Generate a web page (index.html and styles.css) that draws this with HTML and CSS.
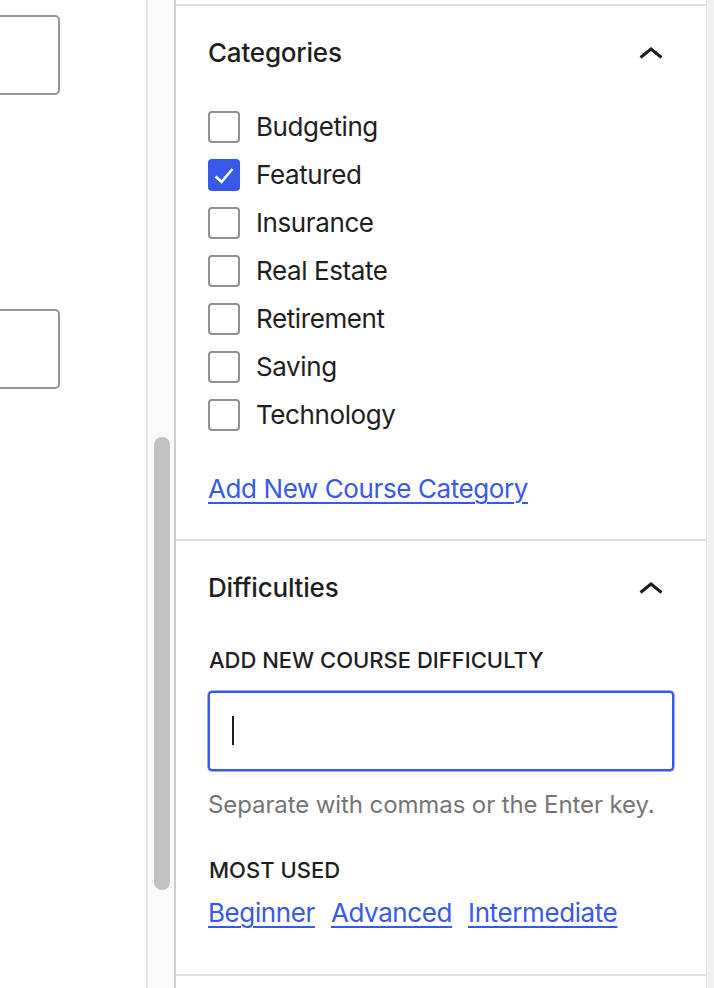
FILE: index.html
```html
<!DOCTYPE html>
<html lang="en">
<head>
<meta charset="utf-8">
<title>Course settings</title>
<link rel="stylesheet" href="styles.css">
</head>
<body>
  <div class="canvas">
    <div class="canvas-field"></div>
    <div class="canvas-field second"></div>
  </div>

  <div class="track">
    <div class="thumb"></div>
  </div>

  <div class="sidebar">
    <div class="panels">
      <section class="panel categories">
        <div class="panel-head">
          <h2 class="panel-title">Categories</h2>
          <svg class="chevron" width="24" height="12" viewBox="0 0 24 12" aria-hidden="true">
            <polyline points="1.5,10.5 12,2 22.5,10.5" fill="none" stroke="#1e1e1e" stroke-width="3"/>
          </svg>
        </div>
        <ul class="check-list">
          <li class="check-row"><span class="box"></span><span class="check-label">Budgeting</span></li>
          <li class="check-row"><span class="box checked"><svg width="32" height="32" viewBox="0 0 32 32" aria-hidden="true"><polyline points="7.5,17.5 13.5,23 24.5,10" fill="none" stroke="#fff" stroke-width="2.6"/></svg></span><span class="check-label">Featured</span></li>
          <li class="check-row"><span class="box"></span><span class="check-label">Insurance</span></li>
          <li class="check-row"><span class="box"></span><span class="check-label">Real Estate</span></li>
          <li class="check-row"><span class="box"></span><span class="check-label">Retirement</span></li>
          <li class="check-row"><span class="box"></span><span class="check-label">Saving</span></li>
          <li class="check-row"><span class="box"></span><span class="check-label">Technology</span></li>
        </ul>
        <a class="link add-link" href="#">Add New Course Category</a>
      </section>

      <section class="panel difficulties">
        <div class="panel-head">
          <h2 class="panel-title">Difficulties</h2>
          <svg class="chevron" width="24" height="12" viewBox="0 0 24 12" aria-hidden="true">
            <polyline points="1.5,10.5 12,2 22.5,10.5" fill="none" stroke="#1e1e1e" stroke-width="3"/>
          </svg>
        </div>
        <div class="field-label">Add New Course Difficulty</div>
        <div class="token-input"><span class="caret"></span></div>
        <p class="help">Separate with commas or the Enter key.</p>
        <div class="field-label most-used">Most Used</div>
        <div class="tags">
          <a class="link" href="#">Beginner</a>
          <a class="link" href="#">Advanced</a>
          <a class="link" href="#">Intermediate</a>
        </div>
      </section>

      <section class="panel empty"></section>
    </div>
    <div class="edge"></div>
  </div>
</body>
</html>
```

FILE: styles.css
```css
* {
  box-sizing: border-box;
}

html, body {
  margin: 0;
  padding: 0;
}

body {
  width: 714px;
  height: 988px;
  overflow: hidden;
  display: flex;
  background: #fff;
  font-family: "Inter", "Noto Sans", sans-serif;
  color: #1e1e1e;
}

/* editor canvas on the left, cut off at the window edge */
.canvas {
  flex: none;
  width: 146px;
  padding-top: 15px;
  overflow: hidden;
}

.canvas-field {
  width: 121px;
  height: 80px;
  margin-left: -61px;
  border: 2px solid #949494;
  border-radius: 5px;
}

.canvas-field.second {
  margin-top: 214px;
}

/* scrollbar between canvas and sidebar */
.track {
  flex: none;
  width: 30px;
  background: #fafafa;
  border-left: 2px solid #e8e8e8;
  border-right: 2px solid #cdcdcd;
  padding-top: 437px;
  padding-left: 6px;
}

.thumb {
  width: 16px;
  height: 453px;
  border-radius: 8px;
  background: #c1c1c1;
}

/* settings sidebar */
.sidebar {
  flex: 1;
  display: flex;
}

.panels {
  flex: none;
  width: 531px;
  padding-top: 4px;
  border-right: 1px solid #e0e0e0;
}

.edge {
  flex: 1;
  background: #f1f1f1;
}

.panel {
  border-top: 2px solid #e0e0e0;
  padding: 31px 32px 0 32px;
}

.panel.categories {
  padding-bottom: 34px;
}

.panel.difficulties {
  padding-bottom: 45px;
}

.panel-head {
  display: flex;
  align-items: center;
  justify-content: space-between;
  height: 32px;
}

.panel-title {
  margin: 0;
  font-size: 26px;
  line-height: 32px;
  font-weight: 500;
  letter-spacing: -0.2px;
}

.chevron {
  display: block;
  margin-right: 11px;
}

.check-list {
  list-style: none;
  margin: 42px 0 0 0;
  padding: 0;
  display: grid;
  row-gap: 16px;
}

.check-row {
  display: flex;
  align-items: center;
  height: 32px;
  gap: 16px;
}

.box {
  flex: none;
  width: 32px;
  height: 32px;
  border: 2px solid #929292;
  border-radius: 4px;
  background: #fff;
}

.box.checked {
  border: 0;
  background: #3858e9;
}

.box svg {
  display: block;
}

.check-label {
  font-size: 26px;
  line-height: 32px;
  letter-spacing: -0.4px;
}

.link {
  color: #3858e9;
  font-size: 26px;
  line-height: 32px;
  letter-spacing: -0.4px;
  text-decoration: underline;
  text-decoration-thickness: 2px;
  text-underline-offset: 4px;
}

.add-link {
  display: inline-block;
  margin: 42px 0 0 0;
}

.field-label {
  margin: 40px 0 0 1px;
  font-size: 22px;
  line-height: 32px;
  font-weight: 500;
  text-transform: uppercase;
}

.token-input {
  margin-top: 15px;
  width: 466px;
  height: 80px;
  border: 2px solid #3858e9;
  border-radius: 4px;
  box-shadow: 0 0 0 0.5px #3858e9;
  padding: 23px 0 0 22px;
}

.caret {
  display: block;
  width: 2px;
  height: 29px;
  background: #1e1e1e;
}

.help {
  margin: 18px 0 0 0;
  font-size: 24px;
  line-height: 32px;
  letter-spacing: -0.1px;
  color: #757575;
}

.field-label.most-used {
  margin-top: 33px;
}

.tags {
  margin-top: 11px;
  display: flex;
  gap: 16px;
}

.panel.empty {
  height: 20px;
  padding: 0;
}
```
